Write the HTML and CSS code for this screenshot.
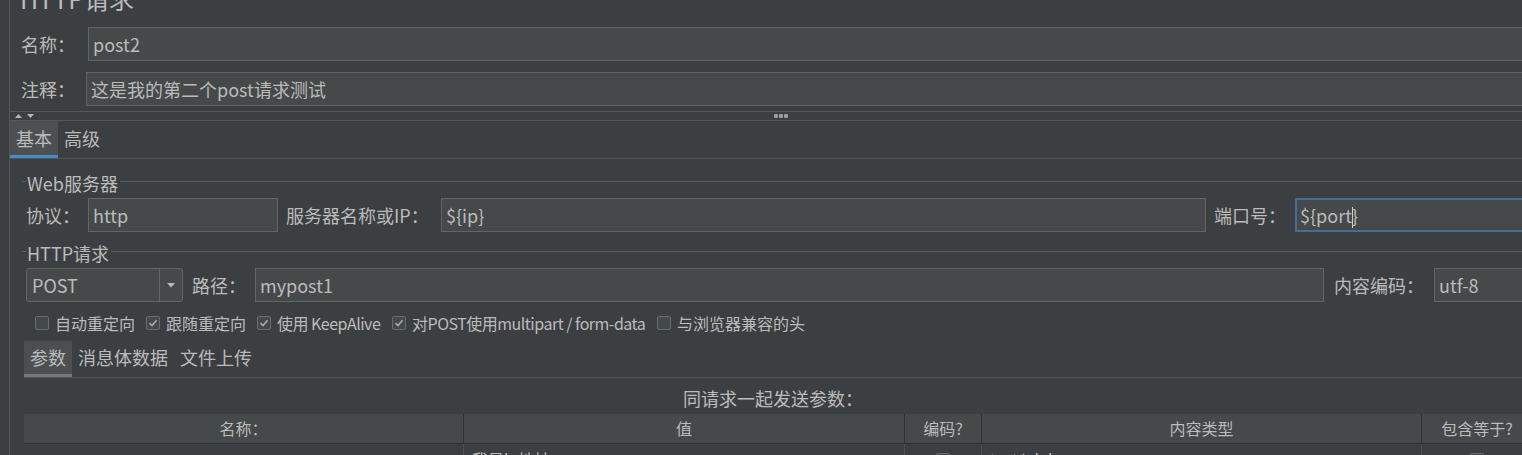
FILE: index.html
```html
<!DOCTYPE html>
<html lang="zh">
<head>
<meta charset="utf-8">
<title>HTTP请求</title>
<link rel="stylesheet" href="styles.css">
</head>
<body>
<div class="page">
  <div class="edge"></div>
  <div class="frame">
    <div class="title">HTTP请求</div>
    <div class="row name-row">
      <span class="lbl lbl-name">名称：</span>
      <div class="field grow">post2</div>
    </div>
    <div class="row comment-row">
      <span class="lbl lbl-comment">注释：</span>
      <div class="field grow">这是我的第二个post请求测试</div>
    </div>
    <div class="splitter">
      <svg class="arrows" width="19" height="5" viewBox="0 0 19 5"><polygon points="0,4 3.5,0 7,4" fill="#b5b5b5"/><polygon points="12,0 19,0 15.5,4" fill="#b5b5b5"/></svg>
      <span class="grip"><i></i><i></i><i></i></span>
    </div>
    <div class="tabbar main-tabs">
      <div class="tab active">基本</div>
      <div class="tab">高级</div>
    </div>
    <div class="tab-body">
      <div class="legend"><span>Web服务器</span></div>
      <div class="row server-row">
        <span class="lbl w-proto">协议：</span>
        <div class="field w-http">http</div>
        <span class="lbl w-host">服务器名称或IP：</span>
        <div class="field grow">${ip}</div>
        <span class="lbl w-port">端口号：</span>
        <div class="field focused w-portbox">${port<i class="caret"></i>}</div>
      </div>
      <div class="legend legend-http"><span>HTTP请求</span></div>
      <div class="row request-row">
        <div class="combo">
          <span class="combo-value">POST</span>
          <span class="combo-btn"><svg width="8" height="5" viewBox="0 0 8 5"><polygon points="0,0 8,0 4,4.5" fill="#bbbbbb"/></svg></span>
        </div>
        <span class="lbl w-path">路径：</span>
        <div class="field grow">mypost1</div>
        <span class="lbl w-enc">内容编码：</span>
        <div class="field w-encbox">utf-8</div>
      </div>
      <div class="checks">
        <label class="check c1"><span class="box"></span>自动重定向</label>
        <label class="check c2"><span class="box on"><svg width="14" height="14" viewBox="0 0 14 14"><path d="M3.5 7.2 L6 9.6 L10.6 4.2" fill="none" stroke="#a9a9a9" stroke-width="1.6"/></svg></span>跟随重定向</label>
        <label class="check c3"><span class="box on"><svg width="14" height="14" viewBox="0 0 14 14"><path d="M3.5 7.2 L6 9.6 L10.6 4.2" fill="none" stroke="#a9a9a9" stroke-width="1.6"/></svg></span><span class="tight">使用 KeepAlive</span></label>
        <label class="check c4"><span class="box on"><svg width="14" height="14" viewBox="0 0 14 14"><path d="M3.5 7.2 L6 9.6 L10.6 4.2" fill="none" stroke="#a9a9a9" stroke-width="1.6"/></svg></span><span class="tight">对POST使用multipart / form-data</span></label>
        <label class="check c5"><span class="box"></span>与浏览器兼容的头</label>
      </div>
      <div class="tabbar sub-tabs">
        <div class="tab active">参数</div>
        <div class="tab">消息体数据</div>
        <div class="tab">文件上传</div>
      </div>
      <div class="caption">同请求一起发送参数：</div>
      <div class="table">
        <div class="thead">
          <div class="th">名称：</div>
          <div class="th">值</div>
          <div class="th">编码?</div>
          <div class="th">内容类型</div>
          <div class="th">包含等于?</div>
        </div>
        <div class="trow">
          <div class="td"></div>
          <div class="td td-left">我是ip地址</div>
          <div class="td"><span class="box small"></span></div>
          <div class="td td-left">text/plain</div>
          <div class="td"><span class="box small"></span></div>
        </div>
      </div>
    </div>
  </div>
</div>
</body>
</html>
```
FILE: styles.css
```css
* { box-sizing: border-box; }
html, body { margin: 0; padding: 0; }
body {
  background: #3c3f41;
  width: 1522px;
  height: 455px;
  overflow: hidden;
  font-family: "Noto Sans CJK SC", "Noto Sans", sans-serif;
  font-size: 18px;
  color: #bbbbbb;
}
.page { display: flex; width: 1540px; }
.edge { width: 10px; flex: none; border-right: 1px solid #515557; }
.frame { width: 1530px; flex: none; }

.title {
  font-size: 25px;
  line-height: 30px;
  height: 30px;
  margin-top: -17px;
  padding-left: 10px;
  white-space: nowrap;
}

.row { display: flex; align-items: center; height: 34px; }
.lbl { flex: none; white-space: nowrap; line-height: 34px; }
.name-row { margin-top: 14px; padding-left: 11px; }
.comment-row { margin-top: 11px; padding-left: 11px; }
.lbl-name { width: 67px; }
.lbl-comment { width: 65px; }

.field {
  height: 34px;
  border: 1px solid #646464;
  background: #45494a;
  padding: 0 4px;
  line-height: 32px;
  white-space: nowrap;
  overflow: hidden;
  flex: none;
}
.grow { flex: 1 1 auto; min-width: 0; }
.field.focused { border: 2px solid #466d94; padding: 0 3px; line-height: 30px; }
.caret {
  display: inline-block;
  width: 0;
  height: 21px;
  border-left: 1px solid #cfcfcf;
  vertical-align: -5px;
  margin-right: -1px;
}

.splitter {
  margin-top: 5px;
  height: 10px;
  border-top: 1px solid #56595b;
  border-bottom: 1px solid #56595b;
  display: flex;
  align-items: center;
}
.arrows { margin-left: 5px; display: block; }
.grip { display: flex; gap: 1px; margin-left: 740px; }
.grip i { display: block; width: 4px; height: 4px; border-radius: 1px; background: #9a9c9e; }

.tabbar { display: flex; border-bottom: 1px solid #515457; }
.main-tabs { height: 38px; }
.tab {
  padding: 0 6px;
  white-space: nowrap;
  border-bottom: 3px solid transparent;
}
.main-tabs .tab { height: 37px; line-height: 34px; }
.main-tabs .tab.active { background: #4c5053; border-bottom-color: #4a88c7; }

.tab-body { padding-left: 12px; }

.legend { display: flex; height: 22px; margin-top: 13px; }
.legend::before, .legend::after {
  content: "";
  height: 0;
  margin-top: 9px;
  border-top: 1px solid #5b5e60;
}
.legend::before { width: 4px; flex: none; }
.legend::after { flex: 1; }
.legend span { line-height: 22px; padding: 0 2px 0 1px; white-space: nowrap; }
.legend-http { margin-top: 10px; }

.server-row { margin-top: 4px; padding-left: 4px; }
.w-proto { width: 62px; }
.w-http { width: 190px; }
.w-host { width: 155px; margin-left: 8px; }
.w-port { width: 81px; margin-left: 8px; }
.w-portbox { width: 245px; }

.request-row { margin-top: 4px; padding-left: 4px; }
.combo {
  flex: none;
  width: 157px;
  height: 34px;
  border: 1px solid #646464;
  border-radius: 3px;
  background: #45494a;
  display: flex;
}
.combo-value { flex: 1; padding-left: 5px; line-height: 32px; }
.combo-btn {
  width: 23px;
  border-left: 1px solid #646464;
  display: flex;
  align-items: center;
  justify-content: center;
}
.combo-btn svg { display: block; margin-top: 1px; }
.w-path { width: 63px; margin-left: 9px; }
.w-enc { width: 100px; margin-left: 10px; }
.w-encbox { width: 106px; }

.checks {
  display: flex;
  align-items: center;
  height: 22px;
  margin-top: 10px;
  padding-left: 13px;
  font-size: 16px;
}
.check { display: flex; align-items: center; white-space: nowrap; flex: none; }
.tight { letter-spacing: -0.5px; }
.c1, .c2 { width: 111px; }
.c3 { width: 135px; }
.c4 { width: 265px; }
.box {
  display: block;
  flex: none;
  width: 14px;
  height: 14px;
  border: 1px solid #6b6b6b;
  border-radius: 2px;
  background: #43494a;
  margin-right: 6px;
}
.box svg { display: block; margin: -1px; }

.sub-tabs { height: 37px; margin-top: 7px; margin-left: 2px; }
.sub-tabs .tab { height: 36px; line-height: 33px; }
.sub-tabs .tab.active { background: #4b4f52; border-bottom-color: #73777a; }

.caption {
  width: 1498px;
  margin-left: 2px;
  margin-top: 8px;
  height: 24px;
  line-height: 24px;
  text-align: center;
  font-size: 18px;
}

.table { margin-left: 2px; margin-top: 4px; width: 1508px; }
.thead, .trow { display: grid; grid-template-columns: 440px 441px 77px 440px 110px; }
.thead { height: 30px; background: #45494a; border-bottom: 1px solid #303234; }
.th {
  font-size: 16px;
  line-height: 29px;
  text-align: center;
  border-right: 1px solid #303234;
  white-space: nowrap;
  overflow: hidden;
}
.th:last-child { border-right: none; }
.trow { height: 26px; }
.td {
  border-right: 1px solid #4f5254;
  font-size: 16px;
  line-height: 20px;
  padding-top: 5px;
  display: flex;
  align-items: flex-start;
  justify-content: center;
  white-space: nowrap;
  overflow: hidden;
}
.td-left { justify-content: flex-start; padding-left: 8px; }
.td:last-child { border-right: none; }
.box.small { margin: 4px 0 0; }
```
